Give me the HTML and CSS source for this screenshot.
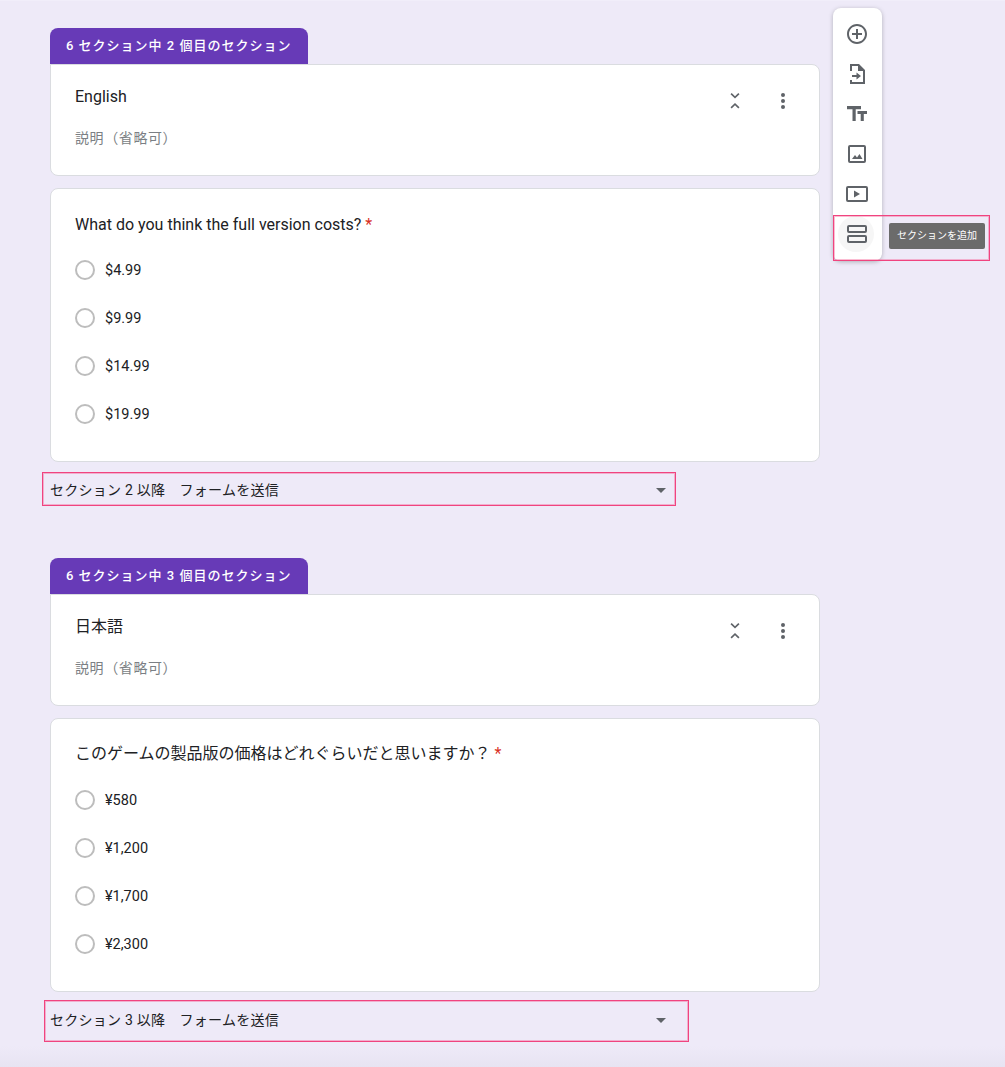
FILE: index.html
```html
<!DOCTYPE html>
<html lang="ja">
<head>
<meta charset="utf-8">
<title>Form</title>
<link rel="stylesheet" href="styles.css">
</head>
<body>
<div class="page">
  <main class="forms">
    <section class="section">
      <div class="tab">6 セクション中 2 個目のセクション</div>
      <div class="card head-card">
        <div class="head-text">
          <div class="title">English</div>
          <div class="desc">説明（省略可）</div>
        </div>
        <div class="head-icons">
          <svg class="ic" viewBox="0 0 24 24"><path d="M8.700 4 12 7.200 15.300 4l1.200 1.200L12 9.500 7.500 5.200z"/><path d="M12 14l4.500 4.300-1.200 1.200L12 16.300 8.700 19.500l-1.200-1.200z"/></svg>
          <svg class="ic" viewBox="0 0 24 24"><circle cx="12" cy="6" r="2"/><circle cx="12" cy="12" r="2"/><circle cx="12" cy="18" r="2"/></svg>
        </div>
      </div>
      <div class="card q-card">
        <div class="question en">What do you think the full version costs?<span class="req">*</span></div>
        <div class="opt"><span class="radio"></span>$4.99</div>
        <div class="opt"><span class="radio"></span>$9.99</div>
        <div class="opt"><span class="radio"></span>$14.99</div>
        <div class="opt"><span class="radio"></span>$19.99</div>
      </div>
      <div class="after">
        <span>セクション 2 以降　フォームを送信</span>
        <span class="caret"></span>
      </div>
      <div class="mark mark-a"></div>
    </section>

    <section class="section second">
      <div class="tab">6 セクション中 3 個目のセクション</div>
      <div class="card head-card">
        <div class="head-text">
          <div class="title">日本語</div>
          <div class="desc">説明（省略可）</div>
        </div>
        <div class="head-icons">
          <svg class="ic" viewBox="0 0 24 24"><path d="M8.700 4 12 7.200 15.300 4l1.200 1.200L12 9.500 7.500 5.200z"/><path d="M12 14l4.500 4.300-1.200 1.200L12 16.300 8.700 19.500l-1.200-1.200z"/></svg>
          <svg class="ic" viewBox="0 0 24 24"><circle cx="12" cy="6" r="2"/><circle cx="12" cy="12" r="2"/><circle cx="12" cy="18" r="2"/></svg>
        </div>
      </div>
      <div class="card q-card">
        <div class="question">このゲームの製品版の価格はどれぐらいだと思いますか？<span class="req">*</span></div>
        <div class="opt"><span class="radio"></span>¥580</div>
        <div class="opt"><span class="radio"></span>¥1,200</div>
        <div class="opt"><span class="radio"></span>¥1,700</div>
        <div class="opt"><span class="radio"></span>¥2,300</div>
      </div>
      <div class="after">
        <span>セクション 3 以降　フォームを送信</span>
        <span class="caret"></span>
      </div>
      <div class="mark mark-b"></div>
    </section>
  </main>

  <aside class="toolbar">
    <div class="tool"><svg viewBox="0 0 24 24"><path d="M13 7h-2v4H7v2h4v4h2v-4h4v-2h-4V7zm-1-5C6.480 2 2 6.480 2 12s4.480 10 10 10 10-4.480 10-10S17.520 2 12 2zm0 18c-4.410 0-8-3.590-8-8s3.590-8 8-8 8 3.590 8 8-3.590 8-8 8z"/></svg></div>
    <div class="tool"><svg viewBox="0 0 24 24"><path d="M14 2H5v7h2V4h6v5h5v11H7v-2H5v4h15V8z"/><path d="M11.500 10.500 16 14l-4.500 3.500V15H7v-2h4.500z"/></svg></div>
    <div class="tool"><svg viewBox="0 0 24 24"><path d="M2 4v3.200h5.500V19h3.200V7.200H16V4zm20 5H12.500v3h3.200v7h3.100v-7H22z"/></svg></div>
    <div class="tool"><svg viewBox="0 0 24 24"><path d="M19 5v14H5V5h14m0-2H5a2 2 0 0 0-2 2v14a2 2 0 0 0 2 2h14a2 2 0 0 0 2-2V5a2 2 0 0 0-2-2z"/><path d="M7 17l3-4 2 2.500 2.500-3.500L17.500 17z"/></svg></div>
    <div class="tool"><svg viewBox="0 0 24 24"><path d="M21 4H3a2 2 0 0 0-2 2v12a2 2 0 0 0 2 2h18a2 2 0 0 0 2-2V6a2 2 0 0 0-2-2zm0 14H3V6h18v12z"/><path d="M9 8.500v7l6-3.500z"/></svg></div>
    <div class="tool active"><svg viewBox="0 0 24 24"><path d="M20 3H4a2 2 0 0 0-2 2v4a2 2 0 0 0 2 2h16a2 2 0 0 0 2-2V5a2 2 0 0 0-2-2zm0 6H4V5h16v4zM20 13H4a2 2 0 0 0-2 2v4a2 2 0 0 0 2 2h16a2 2 0 0 0 2-2v-4a2 2 0 0 0-2-2zm0 6H4v-4h16v4z"/></svg></div>
    <div class="tooltip">セクションを追加</div>
    <div class="mark mark-c"></div>
  </aside>
</div>
</body>
</html>
```

FILE: styles.css
```css
* { box-sizing: border-box; }
html, body { margin: 0; padding: 0; height: 100%; }
body {
  background: #eeeaf8;
  font-family: Roboto, "Noto Sans CJK JP", sans-serif;
  color: #202124;
  overflow: hidden;
}
.page {
  position: relative;
  display: flex;
  align-items: flex-start;
  width: 1005px;
  height: 1067px;
  padding: 8px 0 0 50px;
  background: linear-gradient(to bottom, #eeeaf8 0, #eeeaf8 1045px, #e7e3f2 1067px);
  border-top: 1px solid #f1eefa;
}
.forms { width: 770px; padding-top: 19px; }
.section { position: relative; }
.section.second { margin-top: 58px; }

.tab {
  width: 258px;
  height: 36px;
  padding-left: 16px;
  background: #673ab7;
  color: #fff;
  border-radius: 8px 8px 0 0;
  font-size: 13px;
  font-weight: 500;
  line-height: 36px;
  letter-spacing: 1px;
  white-space: nowrap;
}
.card {
  background: #fff;
  border: 1px solid #dadce0;
  border-radius: 8px;
}
.head-card {
  display: flex;
  justify-content: space-between;
  height: 112px;
  border-top-left-radius: 0;
  margin-bottom: 12px;
  padding: 23px 24px 0 24px;
}
.title { font-size: 16px; line-height: 18px; }
.desc { margin-top: 23px; font-size: 14px; line-height: 18px; letter-spacing: .6px; color: #7b7f84; }
.head-icons { display: flex; gap: 24px; padding-top: 1px; }
.ic { width: 24px; height: 24px; fill: #5f6368; }

.q-card { height: 274px; padding: 25px 24px 0 24px; }
.question { font-size: 16px; line-height: 20px; height: 32px; }
.question.en { padding-top: 1px; }
.req { color: #d93025; margin-left: 4px; }
.opt {
  display: flex;
  align-items: center;
  height: 48px;
  font-size: 14.5px;
}
.radio {
  width: 20px;
  height: 20px;
  margin-right: 10px;
  border: 2px solid #bdbdbd;
  border-radius: 50%;
}
.after {
  display: flex;
  align-items: center;
  justify-content: space-between;
  width: 616px;
  height: 20px;
  margin-top: 18px;
  font-size: 14px;
  line-height: 20px;
  letter-spacing: .25px;
}
.caret {
  width: 0;
  height: 0;
  border-left: 5px solid transparent;
  border-right: 5px solid transparent;
  border-top: 5px solid #5f6368;
}
.mark {
  position: absolute;
  border: 1px solid #f0447f;
  box-shadow: inset 0 0 0 1px rgba(244, 88, 143, .4);
  pointer-events: none;
}
.mark-a { left: -8px; top: 444px; width: 634px; height: 34px; }
.mark-b { left: -6px; top: 442px; width: 645px; height: 42px; }
.mark-c { left: 0; top: 207px; width: 157px; height: 46px; }

.toolbar {
  position: absolute;
  left: 833px;
  top: 7px;
  width: 49px;
  height: 253px;
  padding-top: 8px;
  background: #fff;
  border-radius: 8px;
  box-shadow: 0 1px 4px rgba(60, 64, 67, .35);
}
.tool {
  display: flex;
  align-items: center;
  justify-content: center;
  width: 36px;
  height: 36px;
  margin: 0 0 4px 6px;
  border-radius: 50%;
}
.tool svg { width: 24px; height: 24px; fill: #5f6368; }
.tool.active { background: #f6f6f6; margin-left: 5px; }
.tool.active svg { margin-left: 2px; }
.tooltip {
  position: absolute;
  left: 56px;
  top: 215px;
  width: 96px;
  height: 26px;
  background: #6b6b6b;
  color: #fff;
  border-radius: 2px;
  font-size: 10px;
  line-height: 26px;
  text-align: center;
  white-space: nowrap;
}
```
